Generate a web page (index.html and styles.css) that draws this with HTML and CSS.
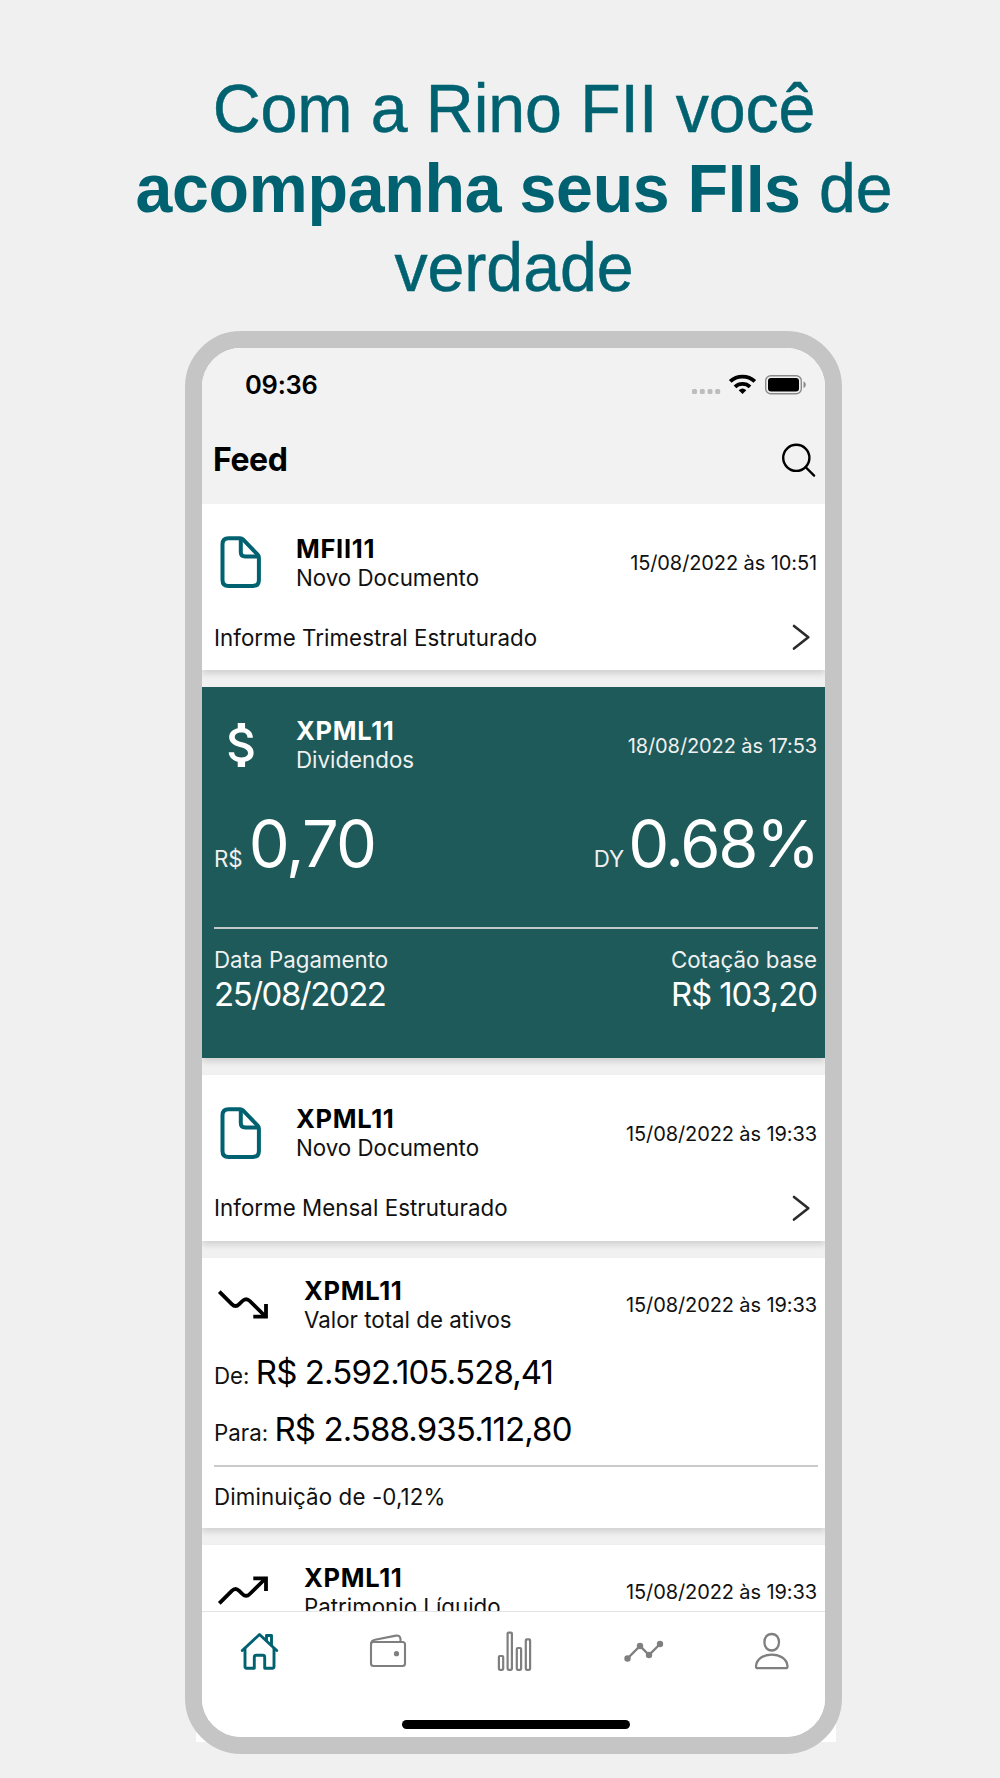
FILE: index.html
```html
<!DOCTYPE html>
<html lang="pt-BR">
<head>
<meta charset="utf-8">
<title>Rino FII</title>
<link rel="stylesheet" href="styles.css">
</head>
<body>
<h1 class="headline"><span class="line">Com a Rino FII você</span><span class="line"><b>acompanha seus FIIs</b> de</span><span class="line">verdade</span></h1>
<main class="phone">
  <div class="screen">
    <div class="status">
      <span class="clock">09:36</span>
      <svg class="status-icons" width="116" height="24" viewBox="690 372 116 24">
        <g fill="#bdbdbd"><rect x="692" y="389" width="5" height="5" rx="1.5"/><rect x="699.8" y="389" width="5" height="5" rx="1.5"/><rect x="707.5" y="389" width="5" height="5" rx="1.5"/><rect x="715.2" y="389" width="5" height="5" rx="1.5"/></g>
        <g fill="none" stroke="#000" stroke-width="3.8"><path d="M730.2 381.4a18 18 0 0 1 24.6 0"/><path d="M735 386.8a11 11 0 0 1 15 0"/></g>
        <path d="M738.7 390.2a5.8 5.8 0 0 1 7.6 0l-3.8 3.8z"/>
        <rect x="765.7" y="375.7" width="35.6" height="18" rx="5" fill="none" stroke="#8a8a8a" stroke-width="1.4"/>
        <rect x="768" y="378" width="31" height="13.4" rx="3"/>
        <path d="M803.5 381.5c3 1 3 5.500 0 6.500z" fill="#8a8a8a"/>
      </svg>
    </div>
    <header class="bar">
      <h2 class="bar-title">Feed</h2>
      <svg width="36" height="36" viewBox="781 441.500 36 36" fill="none" stroke="#000" stroke-width="2.4"><circle cx="796.3" cy="457.300" r="13.100"/><path d="M805.500 466.500l8.600 8.600" stroke-linecap="round"/></svg>
    </header>
    <section class="feed">
      <article class="card">
        <div class="head">
          <svg class="icon" width="56" height="56" viewBox="214 534 56 56" fill="none" stroke="#006270" stroke-width="4" stroke-linejoin="round"><path d="M228.500 538.200h11.500q1.800 0 3 1.200l14.700 15.200q1.200 1.200 1.200 3v22.300q0 6-6 6h-24.400q-6 0-6-6v-35.700q0-6 6-6z"/><path d="M240.800 539v13q0 4.500 4.500 4.500h13"/></svg>
          <div class="who"><h3 class="ticker">MFII11</h3><p class="kind">Novo Documento</p></div>
          <time class="date">15/08/2022 às 10:51</time>
        </div>
        <div class="doc"><span>Informe Trimestral Estruturado</span><svg width="20" height="28" viewBox="791 623 20 28" fill="none" stroke="#2b2b2b" stroke-width="2.600" stroke-linecap="round" stroke-linejoin="round"><path d="M794 626l14.300 11.300-14.300 11.300"/></svg></div>
      </article>
      <article class="card dividend">
        <div class="head">
          <svg class="icon" width="56" height="56" viewBox=".300 .55 22.900 22.900" fill="#fff"><path d="M11.8 10.9c-2.270-.59-3-1.200-3-2.150 0-1.090 1.010-1.850 2.700-1.850 1.780 0 2.440.85 2.500 2.100h2.210c-.07-1.720-1.120-3.300-3.210-3.810V3h-3v2.160c-1.940.42-3.500 1.680-3.500 3.610 0 2.310 1.910 3.460 4.700 4.130 2.500.6 3 1.480 3 2.410 0 .69-.49 1.790-2.700 1.790-2.060 0-2.870-.92-2.980-2.100h-2.200c.12 2.190 1.760 3.420 3.680 3.830V21h3v-2.150c1.950-.37 3.500-1.500 3.500-3.550 0-2.840-2.430-3.810-4.700-4.400z"/></svg>
          <div class="who"><h3 class="ticker">XPML11</h3><p class="kind">Dividendos</p></div>
          <time class="date">18/08/2022 às 17:53</time>
        </div>
        <div class="figures">
          <p><span class="unit">R$</span><span class="big price">0,70</span></p>
          <p><span class="unit">DY</span><span class="big">0.68%</span></p>
        </div>
        <div class="facts">
          <p><span class="label">Data Pagamento</span><span class="value">25/08/2022</span></p>
          <p class="right"><span class="label">Cotação base</span><span class="value">R$ 103,20</span></p>
        </div>
      </article>
      <article class="card">
        <div class="head">
          <svg class="icon" width="56" height="56" viewBox="214 534 56 56" fill="none" stroke="#006270" stroke-width="4" stroke-linejoin="round"><path d="M228.500 538.200h11.500q1.800 0 3 1.200l14.700 15.200q1.200 1.200 1.200 3v22.300q0 6-6 6h-24.400q-6 0-6-6v-35.700q0-6 6-6z"/><path d="M240.800 539v13q0 4.500 4.500 4.500h13"/></svg>
          <div class="who"><h3 class="ticker">XPML11</h3><p class="kind">Novo Documento</p></div>
          <time class="date">15/08/2022 às 19:33</time>
        </div>
        <div class="doc"><span>Informe Mensal Estruturado</span><svg width="20" height="28" viewBox="791 623 20 28" fill="none" stroke="#2b2b2b" stroke-width="2.600" stroke-linecap="round" stroke-linejoin="round"><path d="M794 626l14.300 11.300-14.300 11.300"/></svg></div>
      </article>
      <article class="card trend">
        <div class="head">
          <svg class="icon" width="60" height="56" viewBox="214 1275.500 60 56" fill="none" stroke="#000" stroke-width="3.800"><path d="M219.300 1291.200l12.500 12.500q3.700 3.700 7.400 0l3.200-3.200q3.700-3.700 7.400 0l16.200 16"/><path d="M253.300 1316.200h12.700v-12.700"/></svg>
          <div class="who"><h3 class="ticker">XPML11</h3><p class="kind">Valor total de ativos</p></div>
          <time class="date">15/08/2022 às 19:33</time>
        </div>
        <p class="amount">De: <span class="value">R$ 2.592.105.528,41</span></p>
        <p class="amount">Para: <span class="value">R$ 2.588.935.112,80</span></p>
        <p class="change">Diminuição de -0,12%</p>
      </article>
      <article class="card trend">
        <div class="head">
          <svg class="icon" width="60" height="56" viewBox="214 1562.500 60 56" fill="none" stroke="#000" stroke-width="3.800"><path d="M219.300 1602.800l12.500-12.500q3.700-3.700 7.400 0l3.200 3.200q3.700 3.700 7.400 0l16.200-16"/><path d="M253.300 1577.800h12.700v12.700"/></svg>
          <div class="who"><h3 class="ticker">XPML11</h3><p class="kind">Patrimonio Líquido</p></div>
          <time class="date">15/08/2022 às 19:33</time>
        </div>
      </article>
    </section>
    <nav class="tabs">
      <svg width="44" height="44" viewBox="238 1629 44 44" fill="none" stroke="#006270" stroke-width="2.900" stroke-linejoin="round" stroke-linecap="round"><path d="M242.300 1650.500l17.200-16 17.200 16"/><path d="M245 1648.500v18q0 1.700 1.700 1.700h7.600v-11q0-2 2-2h6.400q2 0 2 2v11h7.600q1.700 0 1.700-1.700v-18"/><path d="M266.500 1640v-4.500h5v9.500"/></svg>
      <svg width="44" height="44" viewBox="366 1629 44 44" fill="none" stroke="#7f7f7f" stroke-width="2.100"><rect x="371" y="1642" width="34" height="24" rx="2.500"/><path d="M371 1644.500q0-4 4-4.700l21-4.200q4-.6 4.500 3.400v3"/><circle cx="396.500" cy="1653.700" r="2.600" fill="#7f7f7f" stroke="none"/></svg>
      <svg width="44" height="44" viewBox="494 1629 44 44" fill="none" stroke="#7f7f7f" stroke-width="2.200"><rect x="498.900" y="1656" width="4.300" height="13.800" rx="1"/><rect x="507.600" y="1632.600" width="4.300" height="37.200" rx="1"/><rect x="516.800" y="1648" width="4.300" height="21.800" rx="1"/><rect x="525.800" y="1639.300" width="4.300" height="30.500" rx="1"/></svg>
      <svg width="44" height="44" viewBox="622 1629 44 44" fill="#7f7f7f"><path d="M627.500 1658.500l12.500-12.500 9 9 11-11" fill="none" stroke="#7f7f7f" stroke-width="2.400"/><circle cx="627.500" cy="1658.500" r="3.200"/><circle cx="640" cy="1646" r="3.200"/><circle cx="649" cy="1655" r="3.200"/><circle cx="660" cy="1644" r="3.200"/></svg>
      <svg width="44" height="44" viewBox="750 1629 44 44" fill="none" stroke="#7f7f7f" stroke-width="2.300" stroke-linejoin="round"><path d="M771.700 1634c10 0 9.500 16.500 0 16.500s-10-16.500 0-16.500z"/><path d="M757.500 1668.200h28.500q1.500 0 1.500-2c-1-15.500-30.500-15.500-31.500 0q0 2 1.500 2z"/></svg>
    </nav>
    <div class="home-indicator"></div>
  </div>
</main>
</body>
</html>
```
FILE: styles.css
```css
* { box-sizing: border-box; margin: 0; padding: 0; }
body { width: 1000px; height: 1778px; overflow: hidden; background: #f0f0f0; font-family: Inter, "Liberation Sans", sans-serif; color: #111; }
svg { display: block; flex: none; }

.headline { height: 331px; padding: 69px 0 0 28px; font: 400 66.3px/79.5px "Liberation Sans", Arial, sans-serif; color: #006270; text-align: center; letter-spacing: -.08px; -webkit-text-stroke: .5px #006270; }
.headline b { letter-spacing: -.28px; -webkit-text-stroke: 0; }
.headline .line { display: block; white-space: nowrap; transform: scaleY(1.04); }

.phone { position: relative; width: 657px; height: 1423px; margin-left: 185px; border: 17px solid #c5c5c5; border-radius: 56px; }
.phone::before { content: ""; position: absolute; z-index: -1; left: -6px; right: -11px; bottom: -5px; height: 60px; background: #fff; }
.screen { display: flex; flex-direction: column; height: 100%; border-radius: 39px; overflow: hidden; background: #fff; }

.status { display: flex; flex: none; align-items: center; justify-content: space-between; height: 74px; padding: 0 19px 0 43px; background: #f2f2f2; }
.clock { font-size: 25.5px; font-weight: 600; color: #000; letter-spacing: -.25px; margin-top: -1px; }
.status-icons { margin-bottom: 2px; }
.bar { display: flex; flex: none; align-items: center; justify-content: space-between; height: 82px; padding: 0 8px 6px 11px; background: #f2f2f2; }
.bar-title { margin-top: -1px; font-size: 32px; line-height: 40px; font-weight: 700; color: #000; letter-spacing: -.4px; }

.feed { display: flex; flex: 1; flex-direction: column; gap: 17px; min-height: 0; overflow: hidden; background: #f1f1f1; }
.card { flex: none; height: 166px; padding: 28.5px 7px 0 12px; background: #fff; box-shadow: 0 4px 6px rgba(0,0,0,.13); }
.head { display: flex; align-items: center; height: 59px; }
.icon { margin-right: 26px; }
.who { flex: 1; }
.ticker { font-size: 25.5px; line-height: 31px; font-weight: 700; color: #000; letter-spacing: .7px; }
.kind { font-size: 22.3px; line-height: 28px; white-space: nowrap; }
.date { font-size: 20px; line-height: 28px; padding: 2px 1px 0 0; letter-spacing: -.1px; }
.doc { display: flex; align-items: center; justify-content: space-between; height: 36px; margin-top: 27.500px; padding-right: 7px; font-size: 22.3px; letter-spacing: .05px; }

.dividend { height: 370.500px; padding-top: 28px; background: #1e5a59; color: #f0f0f0; }
.dividend .ticker { color: #fff; }
.figures { display: flex; justify-content: space-between; height: 155px; padding-top: 29.500px; border-bottom: 2px solid #c5c9c9; line-height: 80px; }
.figures p { display: flex; align-items: baseline; gap: 4px; }
.unit { font-size: 22.3px; }
.big { font-size: 65px; color: #fff; letter-spacing: -2.200px; }
.price { margin-left: 2px; letter-spacing: -1.900px; }
.facts { display: flex; justify-content: space-between; padding: 16px 1px 0 0; }
.label { display: block; font-size: 22.3px; line-height: 30px; letter-spacing: .02px; }
.value { font-size: 33px; line-height: 36px; letter-spacing: -.88px; }
.facts .value { display: block; margin-top: 1px; color: #fff; letter-spacing: -1.500px; }
.right { text-align: right; }
.facts .right .value { letter-spacing: -1.100px; }

.trend { height: 270px; padding-top: 17px; }
.trend .icon { margin-right: 30px; }
.amount { height: 56.500px; font-size: 22.3px; line-height: 56px; white-space: nowrap; }
.amount .value { color: #000; line-height: 56px; }
.head + .amount { margin-top: 10.700px; }
.change { margin-top: 7.500px; padding-top: 16.500px; border-top: 2px solid #cbcbcb; font-size: 22.3px; line-height: 28px; letter-spacing: .12px; }

.tabs { display: flex; flex: none; justify-content: space-between; height: 109px; padding: 17px 31px 0 36px; border-top: 1.500px solid #e3e3e3; background: #fff; }
.home-indicator { flex: none; width: 228px; height: 9px; margin: 0 0 8px 200px; border-radius: 5px; background: #000; }
```
